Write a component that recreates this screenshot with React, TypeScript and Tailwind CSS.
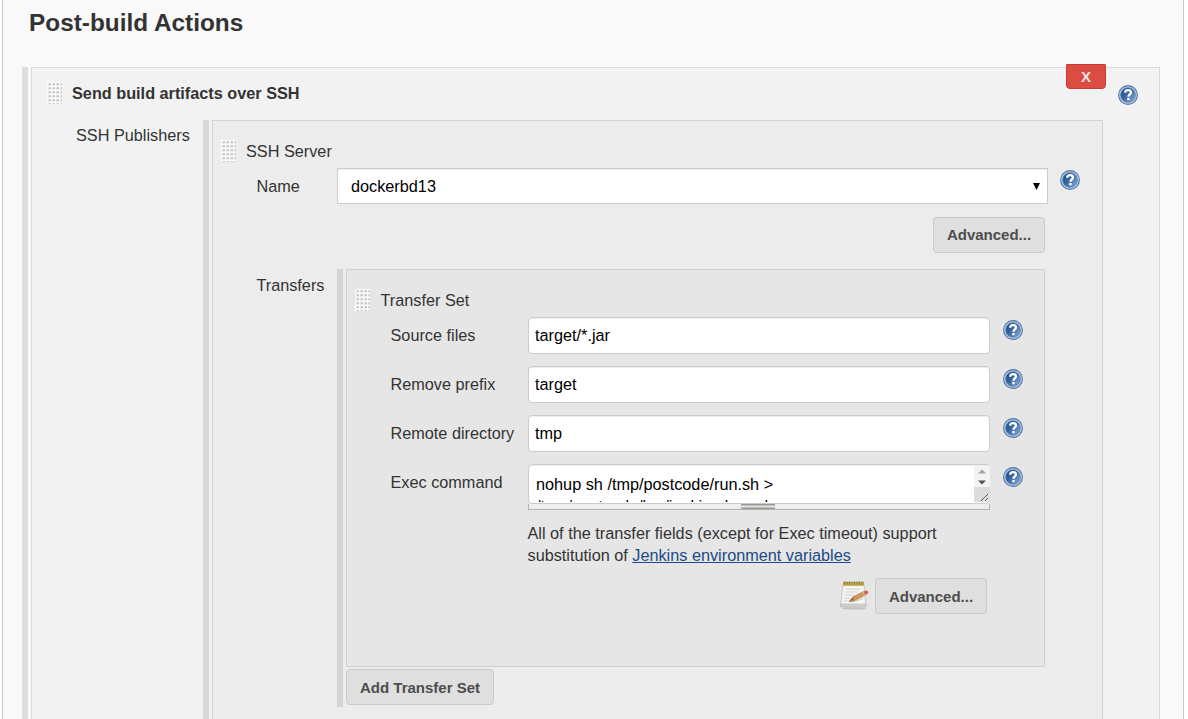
import type { ReactNode } from "react";

function Help() {
  return (
    <svg className="size-5 shrink-0" viewBox="0 0 20 20">
      <defs>
        <linearGradient id="help-fill" x1="0" y1="0.1" x2="1" y2="0.9">
          <stop offset="0" stopColor="#1d4a80" />
          <stop offset="0.4" stopColor="#34649f" />
          <stop offset="1" stopColor="#88a9d0" />
        </linearGradient>
      </defs>
      <circle cx="10" cy="10" r="9.4" fill="#b9cde4" stroke="#5079a9" strokeWidth="1.1" />
      <circle cx="10" cy="10" r="7.3" fill="url(#help-fill)" stroke="#4a76aa" strokeWidth="0.7" />
      <path
        d="M7.2 7.7C7.2 6 8.400 5.100 10.1 5.100C11.900 5.100 12.900 6 12.900 7.400C12.900 9.300 10.500 9.400 10.500 11.700"
        fill="none"
        stroke="#fff"
        strokeWidth="2.3"
      />
      <rect x="9.200" y="12.900" width="2.500" height="2.300" rx="0.5" fill="#fff" />
    </svg>
  );
}

function Grip() {
  const cells = Array.from({ length: 24 }, (_, i) => ({ x: (i % 4) * 4 + 1, y: Math.floor(i / 4) * 4 + 1 }));
  return (
    <svg className="mr-px h-[22px] w-[15px] shrink-0" viewBox="0 0 15 22" shapeRendering="crispEdges">
      <rect width="15" height="22" fill="#fbfbfb" />
      {cells.map(({ x, y }) => (
        <g key={`${x}-${y}`}>
          <rect x={x} y={y} width="3" height="3" fill="#e9e9e9" />
          <rect x={x} y={y + 1} width="3" height="1" fill="#dadada" />
          <rect x={x + 1} y={y} width="2" height="2" fill="#cbcbcb" />
        </g>
      ))}
    </svg>
  );
}

function Notepad() {
  return (
    <svg className="mt-[3px] h-[30px] w-[30px] shrink-0" viewBox="0 0 30 30">
      <ellipse cx="15" cy="27.4" rx="12" ry="1.2" fill="#c2c2c2" />
      <path d="M4 3H25L27 25.500H1.500Z" fill="#f5f5f4" stroke="#bcbcb9" strokeWidth="0.8" />
      <path d="M1.600 23H26.800L27 26H1.400Z" fill="#d0d0ce" stroke="#b0b0ae" strokeWidth="0.5" />
      <rect x="4" y="0.8" width="21" height="4" fill="#b9a74f" />
      <path
        d="M5.500 0.500v3M8 0.500v3M10.500 0.500v3M13 0.500v3M15.500 0.500v3M18 0.500v3M20.500 0.500v3M23 0.500v3"
        stroke="#8c7d3c"
        strokeWidth="0.9"
      />
      <path d="M6.500 8h15M6 11h13M5.500 14h10M5 17h6M4.500 20h4" stroke="#d0d0d0" strokeWidth="1" />
      <path d="M12 21C15 21 19 19.500 24 17" fill="none" stroke="#d4d4d4" strokeWidth="1.5" />
      <path d="M10 20.600L14 15.800L24.500 10.600L26.400 14L15.500 19.600Z" fill="#d19a4c" stroke="#a8783a" strokeWidth="0.6" />
      <path d="M10 20.600L14 15.800L15.500 19.600Z" fill="#9a7648" />
      <path d="M23.200 11.300L25 14.700L26.400 14L24.500 10.600Z" fill="#bfc4c6" />
      <path d="M24.500 10.600L27.200 9.500C29 9.100 29.800 12 28.400 12.900L26.400 14Z" fill="#dc5f55" />
    </svg>
  );
}

function Button({ children, className }: { children: ReactNode; className: string }) {
  return (
    <button
      className={`h-9 rounded-[4px] border border-[#cacaca] bg-[#dfdfdf] text-center text-[15px] font-bold whitespace-nowrap text-[#4d4d4d] ${className}`}
    >
      {children}
    </button>
  );
}

function Field({ label, value }: { label: string; value: string }) {
  return (
    <div className="flex h-[49px]">
      <label className="w-[137px] shrink-0 pt-[7px]">{label}</label>
      <input
        readOnly
        value={value}
        className="h-[37px] w-[462px] rounded-[4px] border border-[#cccccc] bg-white px-[6.500px] text-black shadow-[inset_0_1px_1px_rgba(0,0,0,0.075)] outline-none"
      />
      <div className="pt-[3px] pl-[13px]">
        <Help />
      </div>
    </div>
  );
}

function CommandBox() {
  return (
    <div className="w-[462px]">
      <div className="flex h-10 justify-between rounded-[4px] border border-[#cccccc] bg-white shadow-[inset_0_1px_1px_rgba(0,0,0,0.075)]">
        <div className="mt-[8px] ml-[7.500px] h-[29px] overflow-hidden leading-[22px] whitespace-pre text-black">
          {"nohup sh /tmp/postcode/run.sh >\n/tmp/postcode/log/jenkinsdemo.log"}
        </div>
        <div className="mt-px -mr-px flex h-[36px] w-4 flex-col">
          <svg className="h-[21px] w-4 bg-[#f3f3f3]" viewBox="0 0 16 21">
            <path d="M4 7.500L8 3.500L12 7.500Z" fill="#a1a1a1" />
            <path d="M4 14.500L8 18.500L12 14.500Z" fill="#505050" />
          </svg>
          <svg className="h-[15px] w-4 bg-[#dcdcdc]" viewBox="0 0 16 15">
            <path d="M7 14L14 7M11 14L14 11" stroke="#555" strokeWidth="1" />
            <path d="M8 14.500L15 7.500M12 14.500L15 11.500" stroke="#fff" strokeWidth="0.6" />
          </svg>
        </div>
      </div>
      <div className="flex h-[6px] justify-center border-x border-b border-[#b3b3b3] bg-[#eeeeee] pr-[2px]">
        <div className="h-[5px] w-[34px] border-y border-[#999] bg-[#bfc0b8] pt-px">
          <div className="h-px bg-[#e4e4e0]" />
        </div>
      </div>
    </div>
  );
}

function TransferSet() {
  return (
    <section className="h-[398px] w-[699px] border border-[#cfcfcf] bg-[#e6e6e6] pt-[19px]">
      <div className="flex h-[28px] pl-2">
        <Grip />
        <div className="pl-[9.500px] leading-[23px]">Transfer Set</div>
      </div>
      <div className="pl-[43.500px]">
        <Field label="Source files" value="target/*.jar" />
        <Field label="Remove prefix" value="target" />
        <Field label="Remote directory" value="tmp" />
        <div className="flex h-[58px]">
          <label className="w-[137px] shrink-0 pt-[7px]">Exec command</label>
          <CommandBox />
          <div className="pt-[3px] pl-[13px]">
            <Help />
          </div>
        </div>
      </div>
      <p className="pl-[180.500px] leading-[22px]">
        All of the transfer fields (except for Exec timeout) support
        <br />
        substitution of <a className="text-[#204a87] underline">Jenkins environment variables</a>
      </p>
      <div className="flex justify-end pt-[12px] pr-[57px]">
        <Notepad />
        <Button className="ml-[6px] w-[112px] leading-[36px]">Advanced...</Button>
      </div>
    </section>
  );
}

function SshServer() {
  return (
    <section className="h-[620px] w-[891px] border border-[#d3d3d3] bg-[#ececec] pt-[19px]">
      <div className="flex h-[28px] pl-2">
        <Grip />
        <div className="pl-[9px] leading-[23px]">SSH Server</div>
      </div>
      <div className="flex h-[49px] pl-[43px]">
        <label className="w-[81px] shrink-0 pt-[7px] pl-[0.4px]">Name</label>
        <div className="flex h-9 w-[711px] items-center justify-between border border-[#cccccc] bg-white pr-[7px] pl-[13px] text-black shadow-[inset_0_1px_1px_rgba(0,0,0,0.075)]">
          <span>dockerbd13</span>
          <svg className="h-[7px] w-[7px]" viewBox="0 0 7 7">
            <path d="M0 0H7L3.500 7Z" fill="#000" />
          </svg>
        </div>
        <div className="pt-[2px] pl-3">
          <Help />
        </div>
      </div>
      <div className="flex h-[52px] justify-end pr-[57px]">
        <Button className="w-[112px] leading-[34px]">Advanced...</Button>
      </div>
      <div className="flex pl-[43px]">
        <div className="w-[81px] shrink-0 pt-[5px] pl-[0.4px]">Transfers</div>
        <div className="flex h-[438px] gap-[3px]">
          <div className="w-[6px] bg-[#d4d4d4]" />
          <div>
            <TransferSet />
            <Button className="mt-[2px] w-[148px] leading-[36px]">Add Transfer Set</Button>
          </div>
        </div>
      </div>
    </section>
  );
}

export default function App() {
  return (
    <div className="h-[719px] w-[1188px] overflow-hidden bg-white font-['Liberation_Sans',Arial,sans-serif] text-[16.25px] leading-[22px] text-[#333333]">
      <main className="ml-[2px] h-full w-[1182px] border-x border-[#c8c8c8] bg-[#f9f9f9]">
        <h1 className="h-[67px] pt-[7px] pl-[26px] text-[24.375px] leading-8 font-bold">Post-build Actions</h1>
        <div className="flex h-[652px] gap-[3px] pl-[19px]">
          <div className="w-[6px] bg-[#dfdfdf]" />
          <section className="relative h-[660px] w-[1129px] shrink-0 border border-[#d9d9d9] bg-[#f2f2f2] pt-[14px]">
            <button className="absolute -top-1 right-[53px] h-[25px] w-10 rounded-t-[1px] rounded-b-[4px] border border-[#c83a33] bg-[#db4c43] text-center text-[15px] leading-[24px] font-bold text-[#f3e4e3]">
              X
            </button>
            <div className="flex h-[38px] justify-between pr-[21px] pl-[15px]">
              <div className="flex">
                <Grip />
                <h2 className="pl-[9px] leading-[23px] font-bold">Send build artifacts over SSH</h2>
              </div>
              <div className="pt-[3px]">
                <Help />
              </div>
            </div>
            <div className="flex pl-[44px]">
              <div className="w-[127px] shrink-0 pt-[4px]">SSH Publishers</div>
              <div className="flex gap-[3px]">
                <div className="w-[6px] bg-[#d9d9d9]" />
                <SshServer />
              </div>
            </div>
          </section>
        </div>
      </main>
    </div>
  );
}
